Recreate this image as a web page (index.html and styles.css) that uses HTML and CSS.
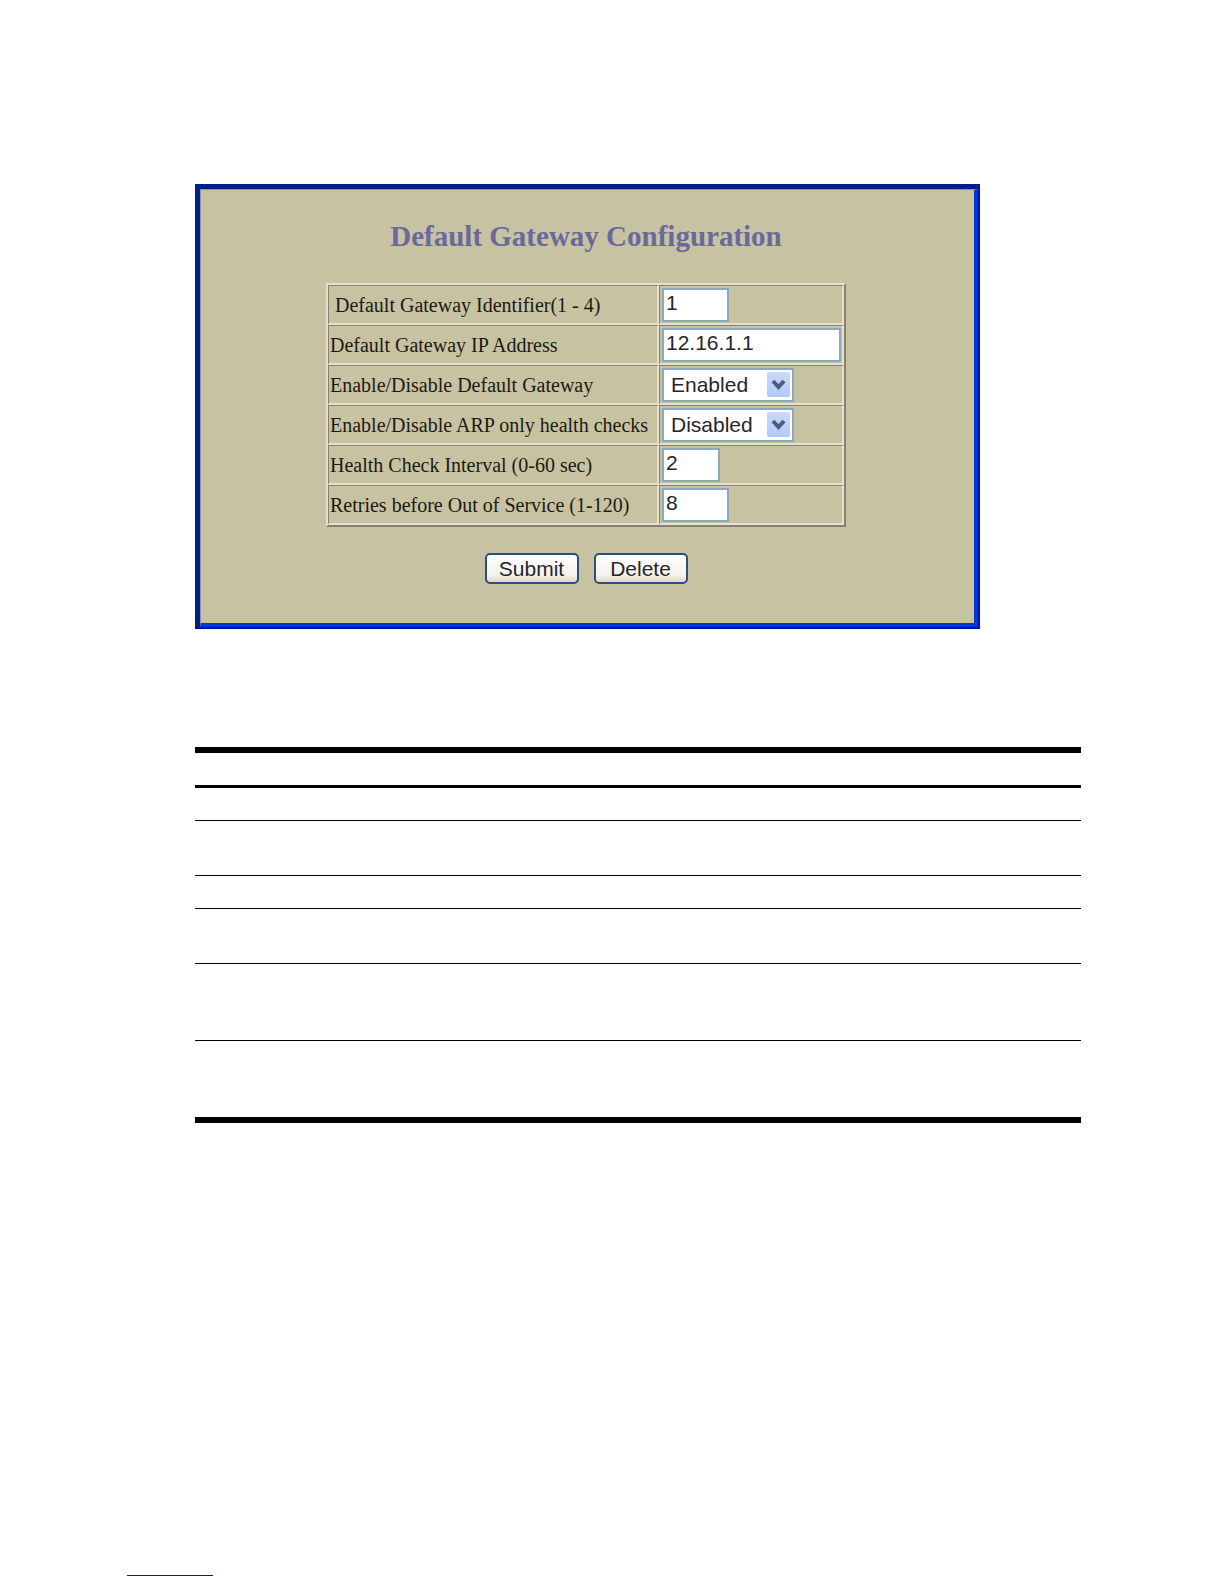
FILE: index.html
```
<!DOCTYPE html>
<html lang="en">
<head>
  <meta charset="UTF-8" />
  <meta name="viewport" content="width=device-width, initial-scale=1.0"/>
  <title>Default Gateway Configuration</title>
  <link rel="stylesheet" href="styles.css">
</head>
<body>
  <main class="page">
    <div class="window">
      <form class="panel">
        <h1 class="title">Default Gateway Configuration</h1>
        <table class="settings">
          <tr>
            <td class="name indent"><label for="gatewayId">Default Gateway Identifier(1 - 4)</label></td>
            <td><input type="text" class="field" id="gatewayId" value="1"></td>
          </tr>
          <tr>
            <td class="name"><label for="gatewayIp">Default Gateway IP Address</label></td>
            <td><input type="text" class="field wide" id="gatewayIp" value="12.16.1.1"></td>
          </tr>
          <tr>
            <td class="name"><label for="gatewayState">Enable/Disable Default Gateway</label></td>
            <td>
              <div class="dropdown">
                <select id="gatewayState">
                  <option selected>Enabled</option>
                  <option>Disabled</option>
                </select>
                <svg class="arrow" viewBox="0 0 23 25"><path d="M6 9l5.500 6 5.500-6"/></svg>
              </div>
            </td>
          </tr>
          <tr>
            <td class="name"><label for="arpState">Enable/Disable ARP only health checks</label></td>
            <td>
              <div class="dropdown">
                <select id="arpState">
                  <option>Enabled</option>
                  <option selected>Disabled</option>
                </select>
                <svg class="arrow" viewBox="0 0 23 25"><path d="M6 9l5.500 6 5.500-6"/></svg>
              </div>
            </td>
          </tr>
          <tr>
            <td class="name"><label for="interval">Health Check Interval (0-60 sec)</label></td>
            <td><input type="text" class="field short" id="interval" value="2"></td>
          </tr>
          <tr>
            <td class="name"><label for="retries">Retries before Out of Service (1-120)</label></td>
            <td><input type="text" class="field" id="retries" value="8"></td>
          </tr>
        </table>
        <div class="buttons">
          <button type="submit">Submit</button>
          <button type="button">Delete</button>
        </div>
      </form>
    </div>

    <table class="ruled">
      <thead>
        <tr><th></th><th></th></tr>
      </thead>
      <tbody>
        <tr><td></td><td></td></tr>
        <tr class="two-lines"><td></td><td></td></tr>
        <tr><td></td><td></td></tr>
        <tr class="two-lines"><td></td><td></td></tr>
        <tr class="three-lines"><td></td><td></td></tr>
        <tr class="three-lines"><td></td><td></td></tr>
      </tbody>
    </table>
  </main>
  <footer class="footer">
    <div class="footer-line"></div>
  </footer>
</body>
</html>
```
FILE: styles.css
```
* {
  box-sizing: border-box;
}
body {
  background: #fff;
  color: #1c1a12;
  font-family: "Liberation Serif", "Times New Roman", serif;
  display: flex;
  flex-direction: column;
  min-height: 100vh;
  margin: 0;
}
.page {
  flex: 1;
  padding: 184px 143px 0 195px;
}

/* Configuration window */
.window {
  max-width: 785px;
  border: 5px solid #002088;
  border-right: 2px solid #0014a0;
  border-bottom: 2px solid #0014a0;
}
.panel {
  background: #c7c2a2;
  border: 1px solid #8d8fa4;
  border-right: 4px solid #0036dc;
  border-bottom: 4px solid #0036dc;
  padding: 29px 3px 39px 0;
  display: flex;
  flex-direction: column;
  align-items: center;
}
.title {
  color: #6a699c;
  font-size: 29px;
  line-height: 34px;
  margin: 0 0 30px;
}
.settings {
  border: 2px solid #e6e1cb;
  border-right-color: #878270;
  border-bottom-color: #878270;
  border-spacing: 0;
  font-size: 20px;
}
.settings td {
  height: 40px;
  padding: 1px 1px 1px 2px;
  border: 1px solid #878270;
  border-right: 2px solid #e6e1cb;
  border-bottom: 2px solid #e6e1cb;
  white-space: nowrap;
}
.settings .name {
  min-width: 331px;
  padding-top: 3px;
  padding-left: 1px;
}
.settings .indent {
  padding-left: 6px;
}
.field,
.dropdown select {
  display: block;
  height: 34px;
  border: 2px solid #8ba8bd;
  border-radius: 0;
  background: #fff;
  color: #26262c;
  font-family: "Liberation Sans", Arial, sans-serif;
  font-size: 21px;
}
.field {
  width: 67px;
  padding: 0 2px 3px;
}
.wide {
  width: 179px;
}
.short {
  width: 58px;
}
.dropdown {
  position: relative;
  width: 132px;
}
.dropdown select {
  appearance: none;
  width: 100%;
  padding: 0 28px 0 7px;
}
.arrow {
  position: absolute;
  top: 4px;
  right: 4px;
  width: 23px;
  height: 25px;
  border-radius: 2px;
  background: linear-gradient(#cbdafc, #b3c8f6);
  pointer-events: none;
}
.arrow path {
  fill: none;
  stroke: #4a5d84;
  stroke-width: 4;
}
.buttons {
  display: flex;
  gap: 15px;
  margin-top: 26px;
}
.buttons button {
  width: 94px;
  height: 31px;
  padding: 0;
  border: 2px solid #2c4f7c;
  border-radius: 5px;
  background: linear-gradient(#fff, #f4f2ec 75%, #dcd6ca);
  color: #26262c;
  font-family: "Liberation Sans", Arial, sans-serif;
  font-size: 21px;
  line-height: 27px;
}

/* Ruled table */
.ruled {
  width: 100%;
  margin-top: 118px;
  border-top: 6px solid #000;
  border-bottom: 6px solid #000;
  border-spacing: 0;
}
.ruled th {
  height: 35px;
  padding: 0;
  border-bottom: 3px solid #000;
}
.ruled td {
  height: 33px;
  padding: 0;
  border-bottom: 1px solid #000;
}
.ruled .two-lines td {
  height: 55px;
}
.ruled .three-lines td {
  height: 77px;
}
.ruled tr.three-lines:last-child td {
  height: 76px;
  border-bottom: 0;
}

.footer {
  padding: 0 127px 8px;
}
.footer-line {
  width: 86px;
  border-top: 1px solid #1a1480;
}
```
